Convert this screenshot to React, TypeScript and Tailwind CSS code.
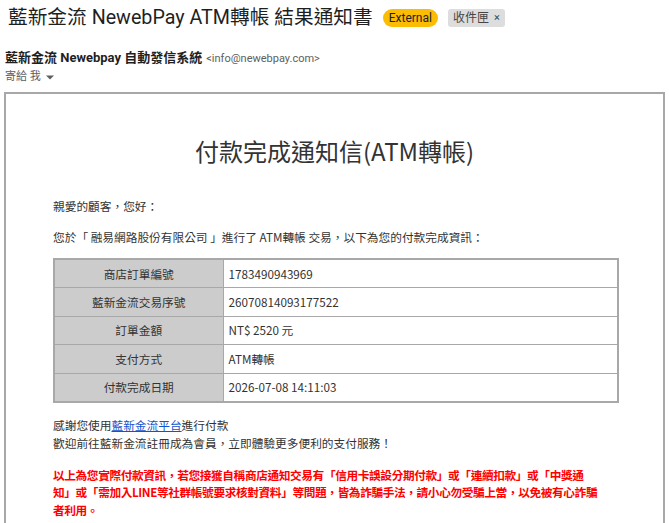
import React from "react";

const cjk = { fontFamily: '"Noto Sans CJK TC", "Noto Sans", sans-serif' };
const hdr = { fontFamily: 'Roboto, "Noto Sans CJK TC", sans-serif' };

const rows: [string, string][] = [
  ["商店訂單編號", "1783490943969"],
  ["藍新金流交易序號", "26070814093177522"],
  ["訂單金額", "NT$ 2520 元"],
  ["支付方式", "ATM轉帳"],
  ["付款完成日期", "2026-07-08 14:11:03"],
];

export default function App() {
  return (
    <div className="w-[669px] h-[523px] overflow-hidden bg-white">
      <div className="flex items-center gap-[10px] pl-[8px] pt-[6px] h-[30px]" style={hdr}>
        <span className="text-[19.7px] text-[#1f1f1f] leading-[28px] whitespace-nowrap">
          藍新金流 NewebPay ATM轉帳 結果通知書
        </span>
        <span className="bg-[#fbbc04] text-[#202124] text-[12px] leading-[18px] px-[6px] rounded-[9px]">External</span>
        <span className="bg-[#dddddd] text-[#444746] text-[12px] leading-[18px] px-[5px] rounded-[3px] flex items-center gap-[5px]">
          收件匣 <span className="text-[11px]">×</span>
        </span>
      </div>
      <div className="pl-[5px] mt-[19px]" style={hdr}>
        <div className="flex items-baseline gap-[4px] leading-[18px]">
          <span className="text-[13px] font-bold text-[#1f1f1f]">藍新金流 Newebpay 自動發信系統</span>
          <span className="text-[11px] text-[#5e5e5e]">&lt;info@newebpay.com&gt;</span>
        </div>
        <div className="flex items-center gap-[4px] text-[11px] text-[#5e5e5e] leading-[16px] mt-[1px]">
          <span>寄給 我</span>
          <svg width="10" height="10" viewBox="0 0 10 10"><path d="M1 3.5 L9 3.5 L5 7.5 Z" fill="#5e5e5e" /></svg>
        </div>
      </div>
      <div className="ml-[4px] mt-[7px] w-[661px] h-[500px] border-2 border-[#a8a8a8] border-b-0" style={cjk}>
        <div className="text-center text-[24px] text-[#333333] mt-[39px] leading-[36px]">付款完成通知信(ATM轉帳)</div>
        <div className="pl-[47px] pr-[44px] text-[11.7px] text-[#333333]">
          <p className="mt-[28px] leading-[18px]">親愛的顧客，您好：</p>
          <p className="mt-[13px] leading-[18px] whitespace-nowrap">您於「 融易網路股份有限公司 」進行了 ATM轉帳 交易，以下為您的付款完成資訊：</p>
          <table className="mt-[12px] w-[566px] border-collapse border-2 border-[#a8a8a8] text-[11.7px]">
            <tbody>
              {rows.map(([k, v]) => (
                <tr key={k} className="h-[28.5px]">
                  <td className="w-[169px] bg-[#cccccc] border border-[#a8a8a8] text-center">{k}</td>
                  <td className="border border-[#a8a8a8] pl-[5px]">{v}</td>
                </tr>
              ))}
            </tbody>
          </table>
          <p className="mt-[13px] leading-[18px]">
            感謝您使用<a className="text-[#1155cc] underline">藍新金流平台</a>進行付款
            <br />
            歡迎前往藍新金流註冊成為會員，立即體驗更多便利的支付服務！
          </p>
          <p className="mt-[14px] leading-[17.5px] text-[#ff0000] font-semibold whitespace-nowrap tracking-[-0.4px]">
            以上為您實際付款資訊，若您接獲自稱商店通知交易有「信用卡誤設分期付款」或「連續扣款」或「中獎通
            <br />
            知」或「需加入LINE等社群帳號要求核對資料」等問題，皆為詐騙手法，請小心勿受騙上當，以免被有心詐騙
            <br />
            者利用。
          </p>
        </div>
      </div>
    </div>
  );
}
